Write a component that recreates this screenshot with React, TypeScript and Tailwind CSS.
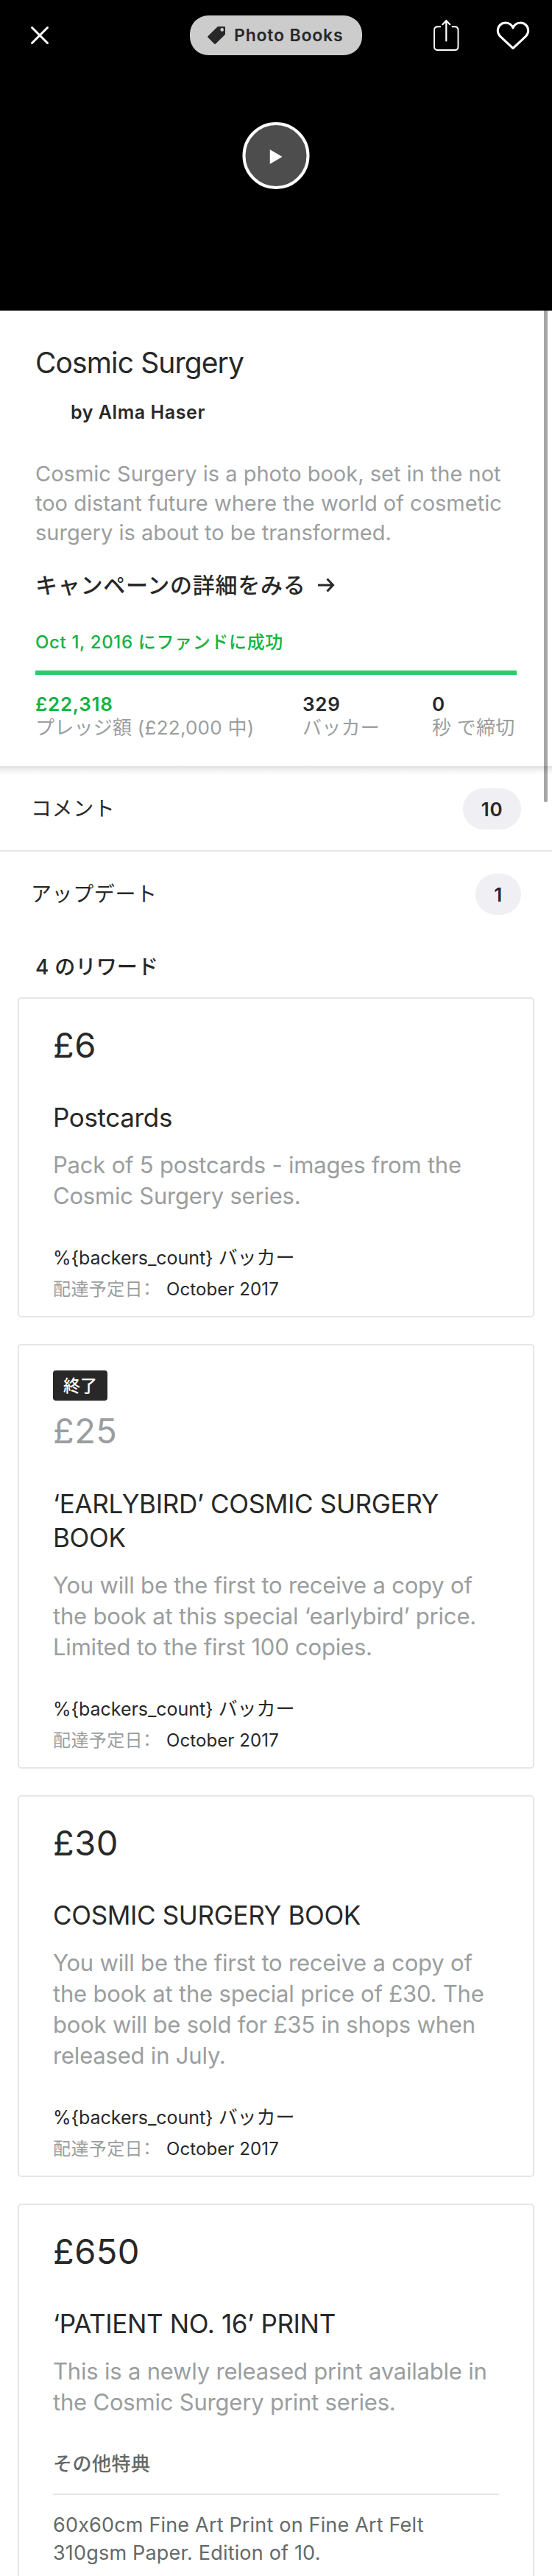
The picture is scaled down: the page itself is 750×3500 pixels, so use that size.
import type { ReactNode } from "react";

type Reward = {
  amount: string;
  title: string[];
  description: string[];
  ended?: boolean;
  items?: string[];
};

const rewards: Reward[] = [
  {
    amount: "£6",
    title: ["Postcards"],
    description: ["Pack of 5 postcards - images from the", "Cosmic Surgery series."],
  },
  {
    amount: "£25",
    ended: true,
    title: ["‘EARLYBIRD’ COSMIC SURGERY", "BOOK"],
    description: [
      "You will be the first to receive a copy of",
      "the book at this special ‘earlybird’ price.",
      "Limited to the first 100 copies.",
    ],
  },
  {
    amount: "£30",
    title: ["COSMIC SURGERY BOOK"],
    description: [
      "You will be the first to receive a copy of",
      "the book at the special price of £30. The",
      "book will be sold for £35 in shops when",
      "released in July.",
    ],
  },
  {
    amount: "£650",
    title: ["‘PATIENT NO. 16’ PRINT"],
    description: ["This is a newly released print available in", "the Cosmic Surgery print series."],
    items: ["60x60cm Fine Art Print on Fine Art Felt", "310gsm Paper. Edition of 10."],
  },
];

function Lines({ lines }: { lines: string[] }) {
  return (
    <>
      {lines.map((line) => (
        <span key={line} className="block whitespace-nowrap">
          {line}
        </span>
      ))}
    </>
  );
}

function Header() {
  return (
    <header className="flex h-[422px] flex-col items-center bg-black">
      <div className="grid h-[96px] w-full grid-cols-[258px_234px_258px] items-center">
        <svg
          className="ml-[40px] h-7 w-7"
          viewBox="0 0 28 28"
          fill="none"
          stroke="#fff"
          strokeWidth="3"
          strokeLinecap="round"
        >
          <path d="M3.5 3.5 24.5 24.5M24.5 3.5 3.5 24.5" />
        </svg>
        <div className="flex h-[54px] items-center rounded-[25px] bg-[#cccccc] pl-6">
          <svg className="h-6 w-6" viewBox="0 0 24 24" fill="#282828" fillRule="evenodd">
            <path d="M14.4 0H23Q24 0 24 1V10.3Q24 10.8 23.6 11.2L11 23.5Q10 24.4 9.1 23.5L.6 15Q-.3 14 .6 13L13.4.5Q13.9 0 14.4 0ZM19.7 2.1A2.3 2.3 0 1 0 19.7 6.7 2.3 2.3 0 1 0 19.7 2.1Z" />
          </svg>
          <span className="ml-[12px] text-[23px] font-semibold tracking-[0.8px] whitespace-nowrap">Photo Books</span>
        </div>
        <div className="flex items-center justify-end gap-[49px] pr-[29px]">
          <svg
            className="h-[44px] w-[36px]"
            viewBox="0 0 36 44"
            fill="none"
            stroke="#fff"
            strokeWidth="1.9"
            strokeLinecap="round"
          >
            <path d="M10.3 10.3H6.8Q2 10.3 2 15V37.2Q2 42 6.8 42H29.7Q34.5 42 34.5 37.2V15Q34.5 10.3 29.7 10.3H26.5" />
            <path d="M18.3 29.5V2.2M13.3 7.2 18.3 2 23.3 7.2" strokeWidth="2.2" />
          </svg>
          <svg
            className="h-[44px] w-[48px]"
            viewBox="0 0 48 44"
            fill="none"
            stroke="#fff"
            strokeWidth="3"
            strokeLinejoin="round"
          >
            <path d="M24 39.6 6.9 23.6C4.3 21 3.3 18.8 3.3 15.8 3.3 9.6 7.8 5.1 13.6 5.1 18.6 5.1 22.3 7.8 24 12 25.7 7.8 29.4 5.1 34.4 5.1 40.2 5.1 44.7 9.6 44.7 15.8 44.7 18.8 43.7 21 41.1 23.6Z" />
          </svg>
        </div>
      </div>
      <div className="mt-[70px] flex h-[91px] w-[91px] -translate-x-[0.5px] items-center justify-center rounded-full border-4 border-white bg-[#4d4d4d]">
        <svg className="ml-px mt-[3px] h-5 w-[17px]" viewBox="0 0 17 20" fill="#fff">
          <path d="M0 0 17 10 0 20Z" />
        </svg>
      </div>
    </header>
  );
}

function Stat({ value, label, className }: { value: string; label: ReactNode; className: string }) {
  return (
    <div className={className}>
      <div className="text-[26px] leading-8 font-semibold tracking-[0.7px]">{value}</div>
      <div className="text-[26px] leading-8 tracking-[0.25px] text-[#9b9e9e]">{label}</div>
    </div>
  );
}

function Summary() {
  return (
    <section className="flex h-[619px] flex-col px-[48px] whitespace-nowrap">
      <h1 className="mt-[47px] text-[39px] leading-[48px] tracking-[-0.875px]">Cosmic Surgery</h1>
      <div className="mt-[27px] pl-[48px] text-[25px] leading-8 font-semibold tracking-[0.57px]">by Alma Haser</div>
      <p className="mt-[48px] text-[29px] leading-10 text-[#9b9e9e]">
        <Lines
          lines={[
            "Cosmic Surgery is a photo book, set in the not",
            "too distant future where the world of cosmetic",
            "surgery is about to be transformed.",
          ]}
        />
      </p>
      <div className="mt-[31px] flex items-center text-[30px] leading-10 font-medium tracking-[0.75px]">
        <span>キャンペーンの詳細をみる</span>
        <svg className="ml-[15px] h-[20px] w-[24px]" viewBox="0 0 24 20" fill="none" stroke="#282828" strokeWidth="3">
          <path d="M1 10H21M13.5 1.5 21.5 10 13.5 18.5" />
        </svg>
      </div>
      <div className="mt-[43px] text-[24px] leading-[30px] font-medium tracking-[0.65px] text-[#11b443]">
        Oct 1, 2016 にファンドに成功
      </div>
      <div className="mt-[23px] h-[6px] shrink-0 bg-[#2bcb6a]" />
      <div className="mt-6 flex">
        <Stat value="£22,318" label="プレッジ額 (£22,000 中)" className="w-[363px] [&>div:first-child]:text-[#11b443]" />
        <Stat value="329" label="バッカー" className="w-[176px]" />
        <Stat value="0" label="秒 で締切" className="" />
      </div>
    </section>
  );
}

function CountRow({ label, count, className }: { label: string; count: number; className: string }) {
  return (
    <div className={`flex items-start justify-between pt-[30px] pr-[42px] pl-[42px] ${className}`}>
      <span className="text-[28px] leading-[56px] tracking-[0.6px]">{label}</span>
      <span
        className={`flex h-14 items-center justify-center rounded-full bg-[#efeff4] text-[26px] font-semibold tracking-[0.7px] ${
          count > 9 ? "w-[79px]" : "w-[62px]"
        }`}
      >
        {count}
      </span>
    </div>
  );
}

function RewardCard({ reward }: { reward: Reward }) {
  const { amount, title, description, ended, items } = reward;
  return (
    <article className="rounded-[5px] border-2 border-[#e6e6e6] px-[46px] pt-[34px] pb-[20px] whitespace-nowrap">
      {ended && (
        <div className="mb-[12px] flex h-[41px] w-[74px] items-center justify-center rounded-[4px] bg-[#282828] pt-px text-[23px] font-medium text-white">
          終了
        </div>
      )}
      <div
        className={`text-[47px] leading-[58px] tracking-[0.45px] ${ended ? "mb-[47px] text-[#9b9e9e]" : "mb-[46px]"}`}
      >
        {amount}
      </div>
      <h2 className="text-[35px] leading-[46px] tracking-[-0.35px]">
        <Lines lines={title} />
      </h2>
      <p className="mt-[21px] text-[31px] leading-[42px] tracking-[-0.2px] text-[#9b9e9e]">
        <Lines lines={description} />
      </p>
      {items ? (
        <>
          <div className="mt-[47px] text-[26px] leading-8 font-medium tracking-[0.5px] text-[#656969]">その他特典</div>
          <ul className="mt-[24px] border-t-2 border-[#e6e6e6] pt-[22px] text-[27px] leading-[38px] tracking-[0.18px] text-[#656969]">
            <Lines lines={items} />
          </ul>
        </>
      ) : (
        <>
          <div className="mt-[47px] text-[25px] leading-8 tracking-[-0.05px]">
            {"%{backers_count} "}
            <span className="text-[26px]">バッカー</span>
          </div>
          <div className="mt-[11px] flex text-[24px] leading-8 tracking-[0.1px]">
            <span className="w-[154px] tracking-[0.4px] text-[#9b9e9e] [font-feature-settings:'halt'_1]">
              配達予定日：
            </span>
            <span>October 2017</span>
          </div>
        </>
      )}
    </article>
  );
}

export default function App() {
  return (
    <div
      lang="ja"
      className="relative h-[3500px] w-[750px] overflow-hidden bg-white font-[Inter,'Noto_Sans_CJK_JP',sans-serif] text-[#282828] [font-feature-settings:'calt'_0]"
    >
      <Header />
      <Summary />
      <div className="h-[12px] bg-linear-to-b from-[#dfdfdf] via-[#f4f4f4] to-white" />
      <CountRow label="コメント" count={10} className="-mt-[12px] h-[116px] border-b-2 border-[#e6e6e6]" />
      <CountRow label="アップデート" count={1} className="h-[114px]" />
      <h3 className="mt-[26px] pl-[48px] text-[28px] leading-[34px] font-medium tracking-[0.2px]">4 のリワード</h3>
      <div className="mt-6 flex flex-col gap-9 px-6">
        {rewards.map((reward) => (
          <RewardCard key={reward.amount} reward={reward} />
        ))}
      </div>
      <div className="absolute top-[422px] right-[6px] h-[668px] w-[5px] rounded-b-full bg-black/35" />
    </div>
  );
}
